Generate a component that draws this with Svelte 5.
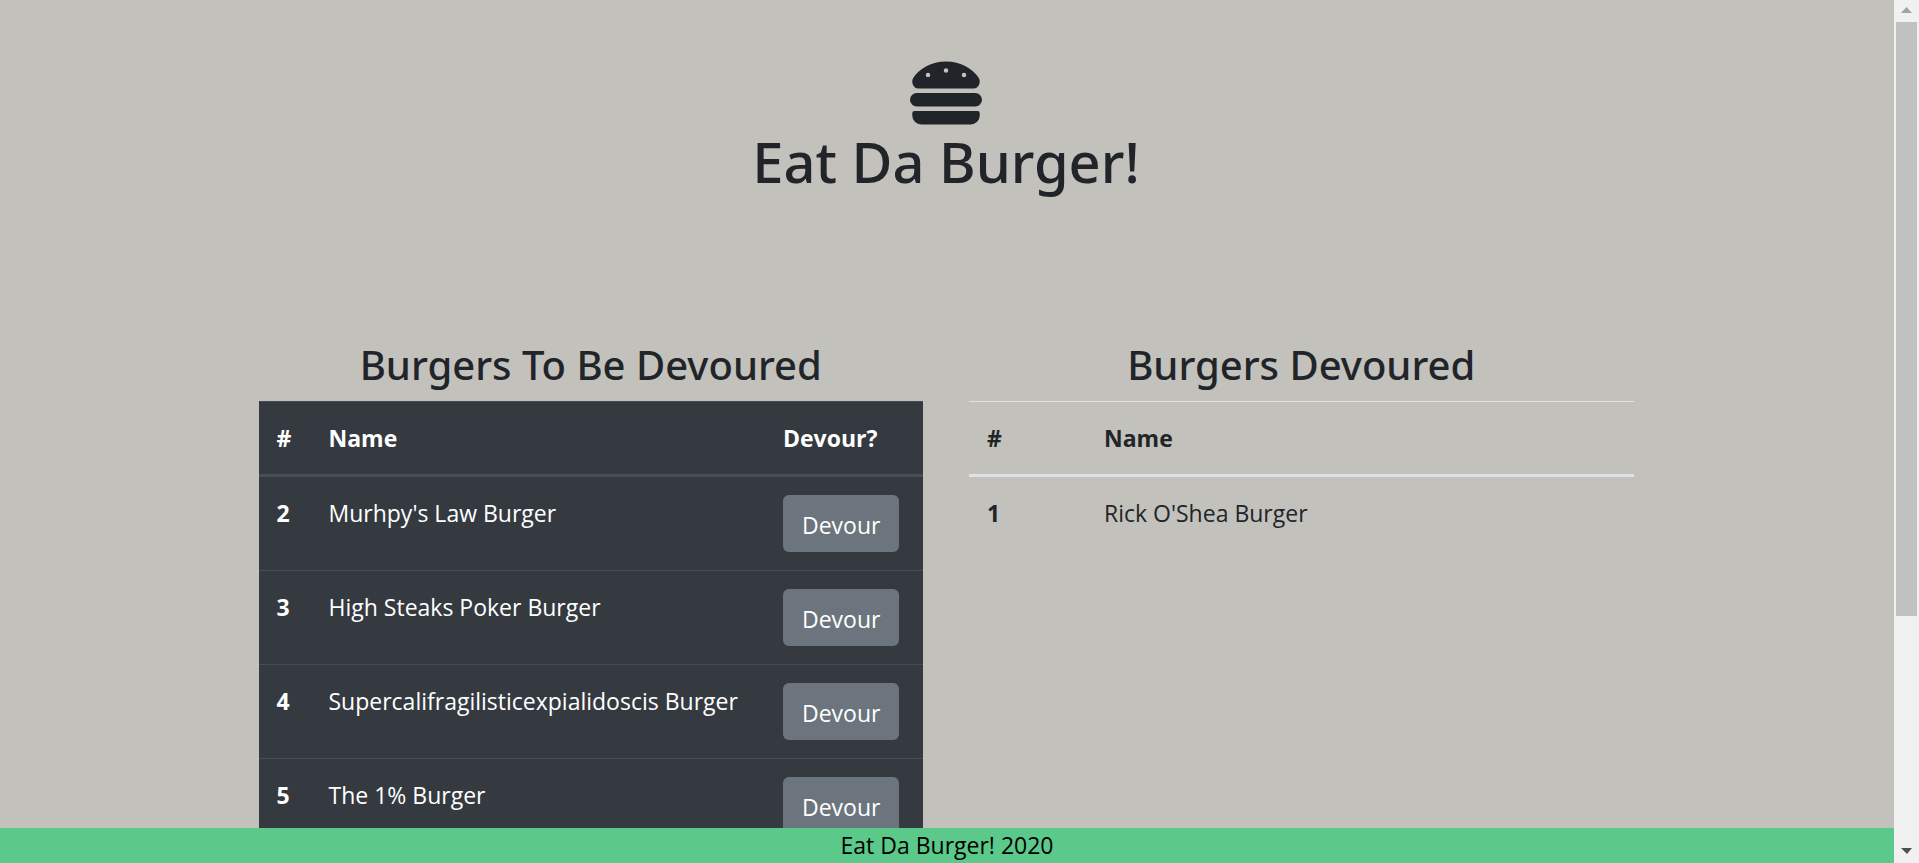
<script>
  const title = 'Eat Da Burger!';
  let burgers = $state([
    { id: 1, name: "Rick O'Shea Burger", devoured: true },
    { id: 2, name: "Murhpy's Law Burger", devoured: false },
    { id: 3, name: 'High Steaks Poker Burger', devoured: false },
    { id: 4, name: 'Supercalifragilisticexpialidoscis Burger', devoured: false },
    { id: 5, name: 'The 1% Burger', devoured: false }
  ]);
  const waiting = $derived(burgers.filter((b) => !b.devoured));
  const eaten = $derived(burgers.filter((b) => b.devoured));
</script>

<div class="window">
  <div class="page">
    <div class="content">
      <header>
        <svg class="logo" viewBox="0 0 512 512" aria-hidden="true">
          <path fill="currentColor" d="M464 256H48a48 48 0 0 0 0 96h416a48 48 0 0 0 0-96zm16 128H32a16 16 0 0 0-16 16v16a64 64 0 0 0 64 64h352a64 64 0 0 0 64-64v-16a16 16 0 0 0-16-16zM58.64 224h394.72c34.57 0 54.62-43.9 34.82-75.88C448 83.2 359.55 32.1 256 32c-103.54.1-192 51.2-232.18 116.11C4 180.09 24.07 224 58.64 224zM384 112a16 16 0 1 1-16 16 16 16 0 0 1 16-16zM256 80a16 16 0 1 1-16 16 16 16 0 0 1 16-16zm-128 32a16 16 0 1 1-16 16 16 16 0 0 1 16-16z" />
        </svg>
        <h1>{title}</h1>
      </header>

      <main>
        <section>
          <h2 id="waiting">Burgers To Be Devoured</h2>
          <table class="dark" aria-labelledby="waiting">
            <thead>
              <tr>
                <th class="number" scope="col">#</th>
                <th scope="col">Name</th>
                <th class="action" scope="col">Devour?</th>
              </tr>
            </thead>
            <tbody>
              {#each waiting as burger (burger.id)}
                <tr>
                  <th scope="row">{burger.id}</th>
                  <td>{burger.name}</td>
                  <td>
                    <button type="button" onclick={() => (burger.devoured = true)}>Devour</button>
                  </td>
                </tr>
              {/each}
            </tbody>
          </table>
        </section>

        <section>
          <h2 id="eaten">Burgers Devoured</h2>
          <table aria-labelledby="eaten">
            <thead>
              <tr>
                <th class="number wide" scope="col">#</th>
                <th scope="col">Name</th>
              </tr>
            </thead>
            <tbody>
              {#each eaten as burger (burger.id)}
                <tr>
                  <th scope="row">{burger.id}</th>
                  <td>{burger.name}</td>
                </tr>
              {/each}
            </tbody>
          </table>
        </section>
      </main>
    </div>

    <footer>Eat Da Burger! 2020</footer>
  </div>

  <div class="scrollbar" aria-hidden="true">
    <svg class="arrow" viewBox="0 0 25 22"><path fill="#a3a3a3" d="M12.5 7 18 13H7z" /></svg>
    <div class="track"><div class="thumb"></div></div>
    <svg class="arrow" viewBox="0 0 25 22"><path fill="#505050" d="M7 7h11l-5 6z" /></svg>
  </div>
</div>

<style>
  :global(body) {
    margin: 0;
    background: #c3c1bc;
  }

  .window {
    display: flex;
    height: 100vh;
    overflow: hidden;
    color: #212529;
    font: 400 23px/36px "Open Sans", "Noto Sans", sans-serif;
  }

  .page {
    flex: 1;
    min-width: 0;
    display: flex;
    flex-direction: column;
  }

  .content {
    flex: 1;
    min-height: 0;
    padding-right: 2px;
    overflow: hidden;
  }

  header {
    padding: 57px 24px 146px;
    text-align: center;
  }

  .logo {
    display: block;
    width: 72px;
    height: 72px;
    margin: 0 auto;
  }

  h1,
  h2 {
    margin: 0;
    font-family: "Noto Sans", "Open Sans", sans-serif;
    font-weight: 500;
    text-align: center;
  }

  h1 {
    font-size: 56px;
    line-height: 64px;
  }

  h2 {
    margin-bottom: 10px;
    font-size: 40px;
    line-height: 52px;
  }

  main {
    box-sizing: border-box;
    width: 75%;
    margin: 0 auto;
    padding: 0 22px;
    display: grid;
    grid-template-columns: repeat(2, minmax(0, 1fr));
    gap: 46px;
  }

  table {
    width: 100%;
    table-layout: fixed;
    border-spacing: 0;
    --rule: #dee2e6;
  }

  .dark {
    color: #fff;
    background: #343a40;
    --rule: #454d55;
  }

  th,
  td {
    padding: 18px;
    border-top: 1px solid var(--rule);
    text-align: left;
    vertical-align: top;
  }

  thead th {
    border-bottom: 3px solid var(--rule);
  }

  tbody tr:first-child > * {
    border-top: 0;
  }

  th {
    font-weight: 700;
  }

  .number {
    width: 16px;
  }

  .wide {
    width: 81px;
  }

  .action {
    width: 122px;
  }

  button {
    display: block;
    padding: 12px 19px 9px;
    border: 0;
    border-radius: 6px;
    background: #6c757d;
    color: #fff;
    font: inherit;
  }

  footer {
    background: #5bc98a;
    color: #000;
    line-height: 35px;
    text-align: center;
  }

  .scrollbar {
    width: 25px;
    display: flex;
    flex-direction: column;
    background: #f1f1f1;
  }

  .arrow {
    display: block;
    width: 25px;
    height: 22px;
  }

  .track {
    flex: 1;
    padding: 0 2px;
  }

  .thumb {
    height: 72.5%;
    background: #c1c1c1;
  }
</style>
